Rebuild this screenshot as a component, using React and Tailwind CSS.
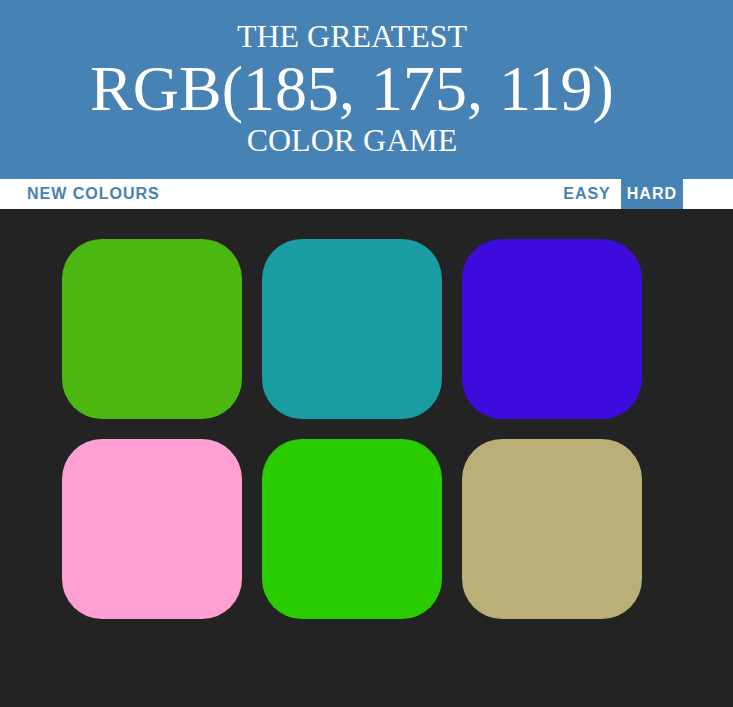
import React from 'react';

const colors = [
  'bg-[#4bb811]',
  'bg-[#1a9ca3]',
  'bg-[#3d0cdc]',
  'bg-[#ffa0d5]',
  'bg-[#2acc00]',
  'bg-[#b9af77]',
];

export default function App() {
  return (
    <div className="min-h-[707px] bg-[#232323]" style={{ fontFamily: '"Liberation Sans", Arial, sans-serif' }}>
      {/* Header */}
      <h1
        className="bg-[#4682b4] text-white text-center uppercase font-normal pt-[19px] pb-[22px] pr-[29px]"
        style={{ fontFamily: '"Liberation Serif", "Times New Roman", serif' }}
      >
        <span className="block text-[32px] leading-[34px]">The Greatest</span>
        <span className="block text-[64px] leading-[71px]">RGB(185, 175, 119)</span>
        <span className="block text-[32px] leading-[33px]">Color Game</span>
      </h1>

      {/* Nav */}
      <div className="bg-white h-[30px] flex items-stretch pl-[21px] pr-[50px] font-bold text-[16px] tracking-[1px] uppercase">
        <button className="px-[6px] text-[#4682b4] uppercase">New Colours</button>
        <div className="flex-1" />
        <button className="px-[6px] text-[#4682b4] uppercase">Easy</button>
        <button className="ml-[4px] px-[6px] bg-[#4682b4] text-white uppercase">Hard</button>
      </div>

      {/* Squares */}
      <div className="pt-[30px] pl-[62px]">
        <div className="grid grid-cols-[repeat(3,180px)] gap-[20px]">
          {colors.map((c, i) => (
            <div key={i} className={`w-[180px] h-[180px] rounded-[40px] ${c}`} />
          ))}
        </div>
      </div>
    </div>
  );
}
